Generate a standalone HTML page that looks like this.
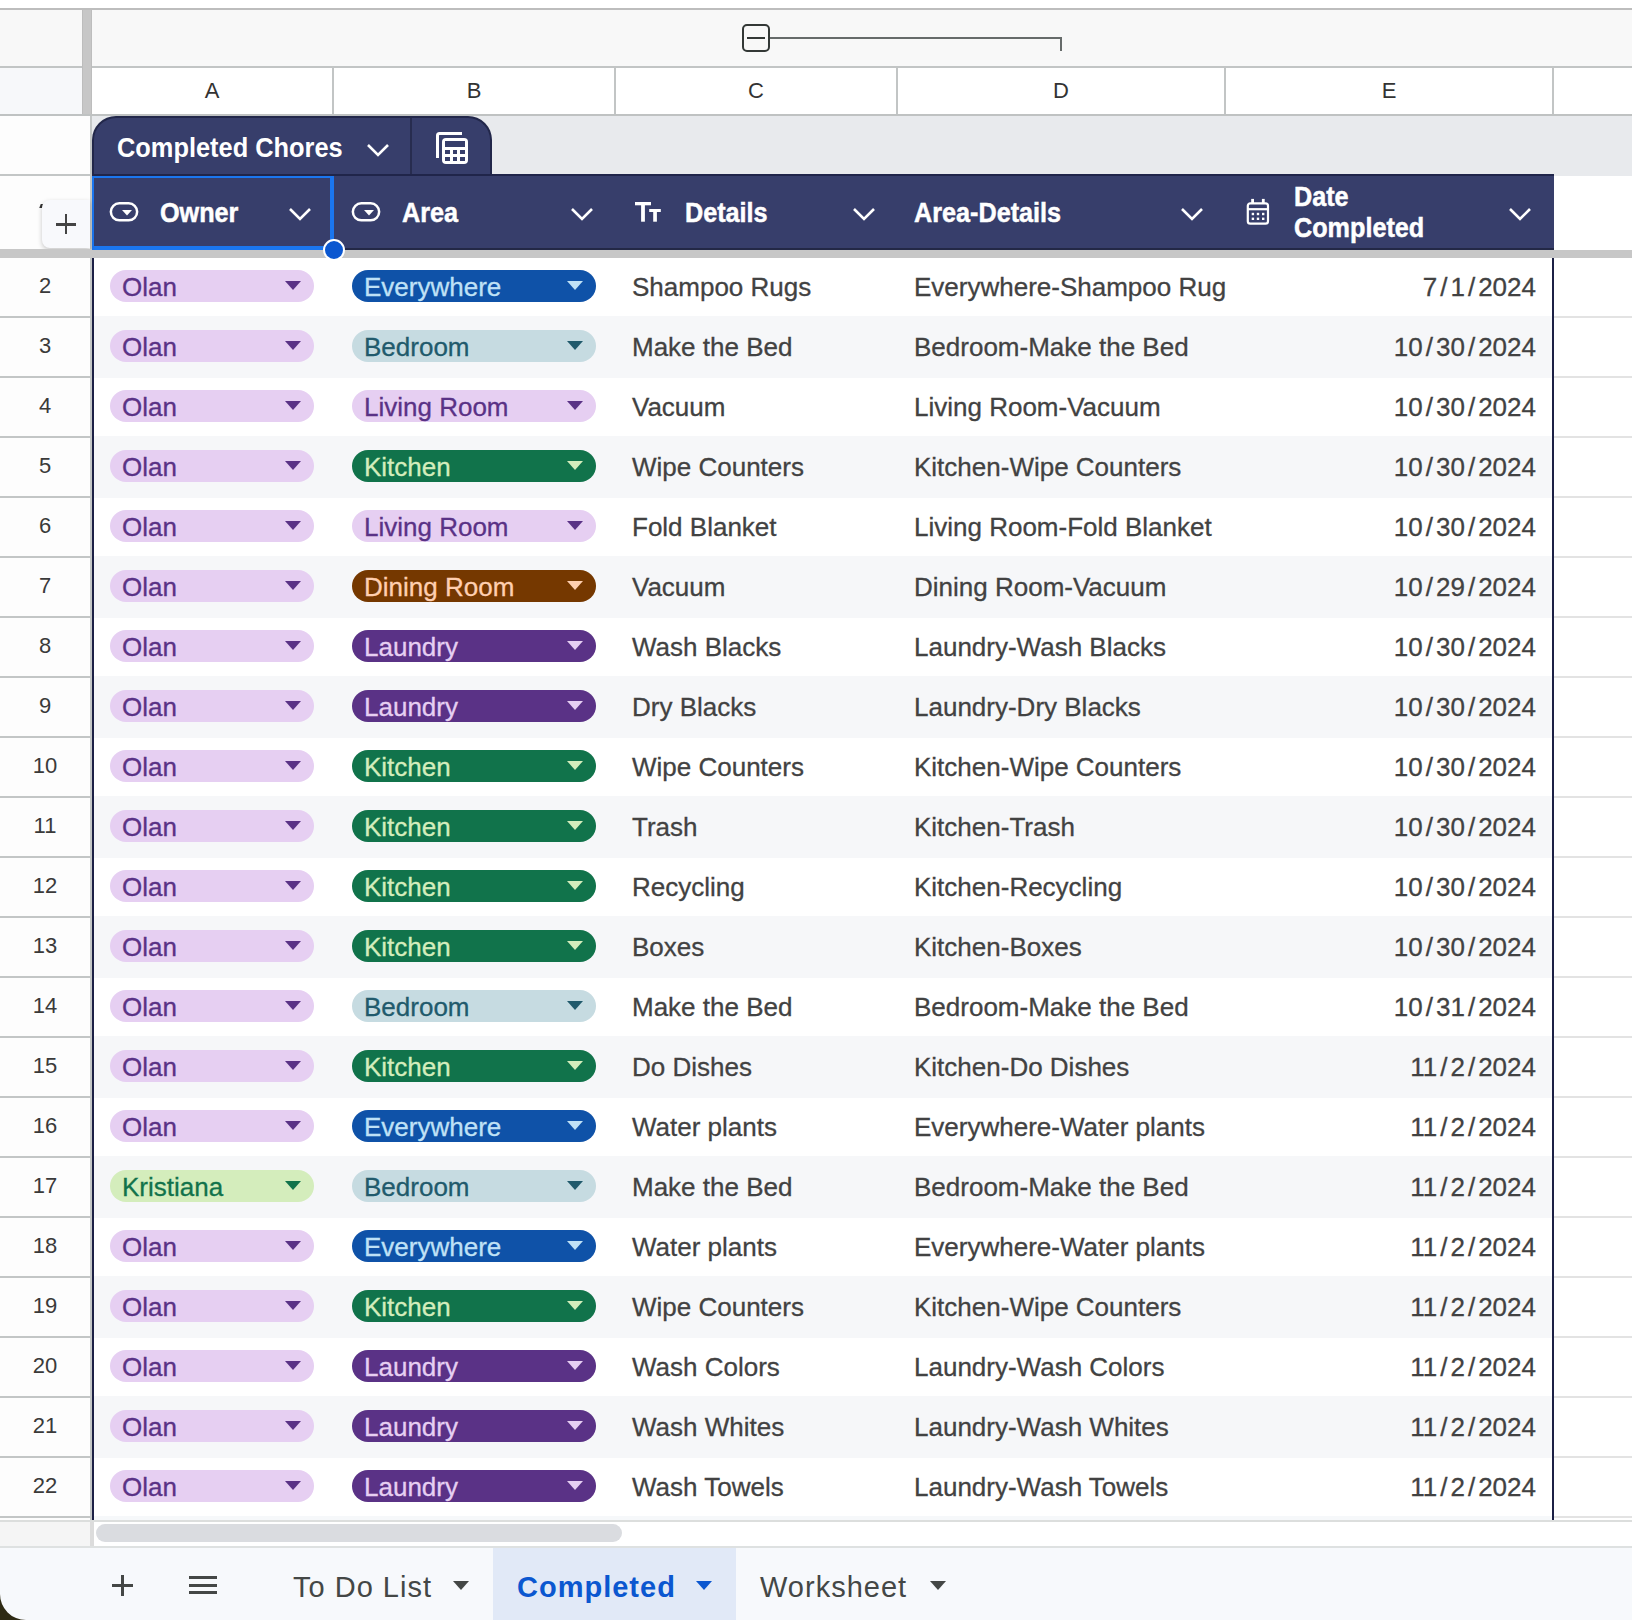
<!DOCTYPE html><html><head><meta charset="utf-8"><style>html,body{margin:0;padding:0;width:1632px;height:1620px;overflow:hidden;background:#fff;font-family:"Liberation Sans",sans-serif;}
.abs{position:absolute;}
.hl{left:0;width:1632px;height:2px;}
.colL{height:46px;line-height:46px;text-align:center;font-size:22px;color:#333;}
.tabname{background:#373e6b;border-radius:24px 24px 0 0;border:2px solid #22274a;border-bottom:none;box-sizing:border-box;}
.tntext{height:60px;line-height:62px;font-size:27px;color:#fff;font-weight:bold;}
.hdtext{height:74px;line-height:74px;font-size:28px;color:#fff;font-weight:bold;-webkit-text-stroke:0.5px #fff;}
.hdtext2{line-height:31px;font-size:28px;color:#fff;font-weight:bold;-webkit-text-stroke:0.5px #fff;}
.tt{height:74px;line-height:74px;color:#fff;}
.plusbtn{background:#f8f9fc;border-radius:8px 0 0 8px;box-shadow:0 2px 5px rgba(0,0,0,0.22);}
.rownum{line-height:60px;text-align:center;font-size:22px;color:#3a3a3a;}
.chip{height:32px;line-height:34px;-webkit-text-stroke:0.3px currentColor;border-radius:16px;font-size:26px;padding-left:12px;box-sizing:border-box;}
.chip .tri{position:absolute;right:13px;top:11px;width:0;height:0;border-left:8.5px solid transparent;border-right:8.5px solid transparent;border-top:9px solid currentColor;}
.lp{background:#e6cff2;color:#5a3286;}
.lg{background:#d4edbc;color:#11734b;}
.db{background:#0f52a8;color:#bfe1f6;}
.lc{background:#c6dbe1;color:#215a6c;}
.dg{background:#11734b;color:#d4edbc;}
.dbr{background:#753800;color:#ffcfb0;}
.dp{background:#5a3286;color:#e6cff2;}
.cell{height:60px;line-height:62px;font-size:26px;color:#424242;white-space:nowrap;-webkit-text-stroke:0.3px currentColor;}
.sheet{height:72px;line-height:72px;font-size:29px;letter-spacing:1px;}
.act{font-weight:bold;}
.stri{width:0;height:0;border-left:8px solid transparent;border-right:8px solid transparent;border-top:9px solid #444;}

.sx{display:inline-block;transform:scaleX(0.9);transform-origin:0 50%;}
.sx2{display:inline-block;transform:scaleX(0.94);transform-origin:0 50%;}
.sl{margin:0 3px;}
</style></head><body><div class="abs" style="left:0;top:0;width:1632px;height:8px;background:#fff"></div>
<div class="abs hl" style="top:8px;background:#bdbdbd"></div>
<div class="abs" style="left:0;top:10px;width:1632px;height:56px;background:#f8f8f8"></div>
<div class="abs hl" style="top:66px;background:#c2c5c5"></div>
<div class="abs" style="left:0;top:68px;width:82px;height:46px;background:#f7f8fa"></div>
<div class="abs" style="left:92px;top:68px;width:1540px;height:46px;background:#fff"></div>
<div class="abs hl" style="top:114px;background:#bfc2c2"></div>
<div class="abs" style="left:82px;top:10px;width:10px;height:104px;background:#c7c7c7;border-left:1px solid #bdbdbd;border-right:1px solid #bdbdbd;box-sizing:border-box"></div>
<div class="abs" style="left:742px;top:24px;width:28px;height:28px;border:2px solid #333836;border-radius:5px;box-sizing:border-box"></div>
<div class="abs" style="left:747px;top:37px;width:18px;height:2px;background:#333836"></div>
<div class="abs" style="left:770px;top:37px;width:292px;height:2px;background:#666b6a"></div>
<div class="abs" style="left:1060px;top:37px;width:2px;height:14px;background:#666b6a"></div>
<div class="abs colL" style="left:92px;width:240px;top:68px">A</div>
<div class="abs colL" style="left:334px;width:280px;top:68px">B</div>
<div class="abs colL" style="left:616px;width:280px;top:68px">C</div>
<div class="abs colL" style="left:898px;width:326px;top:68px">D</div>
<div class="abs colL" style="left:1226px;width:326px;top:68px">E</div>
<div class="abs" style="left:332px;top:68px;width:2px;height:46px;background:#c2c5c5"></div>
<div class="abs" style="left:614px;top:68px;width:2px;height:46px;background:#c2c5c5"></div>
<div class="abs" style="left:896px;top:68px;width:2px;height:46px;background:#c2c5c5"></div>
<div class="abs" style="left:1224px;top:68px;width:2px;height:46px;background:#c2c5c5"></div>
<div class="abs" style="left:1552px;top:68px;width:2px;height:46px;background:#c2c5c5"></div>
<div class="abs" style="left:0;top:116px;width:90px;height:134px;background:#fdfdfd"></div>
<div class="abs" style="left:90px;top:116px;width:2px;height:134px;background:#c4c7c7"></div>
<div class="abs" style="left:92px;top:116px;width:1540px;height:60px;background:#e8eaed"></div>
<div class="abs" style="left:1554px;top:176px;width:78px;height:74px;background:#fff"></div>
<div class="abs tabname" style="left:92px;top:116px;width:400px;height:60px"></div>
<div class="abs tntext" style="left:117px;top:117px"><span class="sx2">Completed Chores</span></div>
<svg class="abs" style="left:366px;top:142px" width="24" height="16" viewBox="0 0 24 16"><path d="M2 3 L12 13 L22 3" fill="none" stroke="#fff" stroke-width="2.6"/></svg>
<div class="abs" style="left:410px;top:118px;width:2px;height:58px;background:#272c4f"></div>
<svg class="abs" style="left:430px;top:128px" width="44" height="40" viewBox="0 0 44 40">
<path d="M7.5 30 V7.5 Q7.5 5.5 9.5 5.5 H32" fill="none" stroke="#fff" stroke-width="3"/>
<rect x="12" y="10" width="26" height="26" rx="4" fill="#fff"/>
<rect x="15" y="13" width="20" height="6" fill="#373e6b"/>
<rect x="15" y="22" width="5" height="4" fill="#373e6b"/><rect x="23" y="22" width="4" height="4" fill="#373e6b"/><rect x="30" y="22" width="5" height="4" fill="#373e6b"/>
<rect x="15" y="29" width="5" height="4" fill="#373e6b"/><rect x="23" y="29" width="4" height="4" fill="#373e6b"/><rect x="30" y="29" width="5" height="4" fill="#373e6b"/>
</svg>
<div class="abs" style="left:92px;top:174px;width:1462px;height:76px;background:#373e6b;border-top:2px solid #20254a;border-bottom:2px solid #232846;box-sizing:border-box"></div>
<svg class="abs" style="left:108px;top:200px" width="32" height="24" viewBox="0 0 32 24"><rect x="2.85" y="3.35" width="26.3" height="16.9" rx="8.45" fill="none" stroke="#fff" stroke-width="2.5"/><path d="M14 10 H24 L19 15.5 Z" fill="#fff"/></svg>
<div class="abs hdtext" style="left:160px;top:176px"><span class="sx">Owner</span></div>
<svg class="abs" style="left:288px;top:206px" width="24" height="16" viewBox="0 0 24 16"><path d="M2 3 L12 13 L22 3" fill="none" stroke="#fff" stroke-width="2.6"/></svg>
<svg class="abs" style="left:350px;top:200px" width="32" height="24" viewBox="0 0 32 24"><rect x="2.85" y="3.35" width="26.3" height="16.9" rx="8.45" fill="none" stroke="#fff" stroke-width="2.5"/><path d="M14 10 H24 L19 15.5 Z" fill="#fff"/></svg>
<div class="abs hdtext" style="left:402px;top:176px"><span class="sx">Area</span></div>
<svg class="abs" style="left:570px;top:206px" width="24" height="16" viewBox="0 0 24 16"><path d="M2 3 L12 13 L22 3" fill="none" stroke="#fff" stroke-width="2.6"/></svg>
<svg class="abs" style="left:630px;top:198px" width="36" height="28" viewBox="0 0 36 28"><rect x="5" y="4" width="16" height="3.3" fill="#fff"/><rect x="11.1" y="4" width="3.8" height="19.7" fill="#fff"/><rect x="19.2" y="11" width="11.6" height="3" fill="#fff"/><rect x="23.2" y="11" width="3.7" height="12.7" fill="#fff"/></svg>
<div class="abs hdtext" style="left:685px;top:176px"><span class="sx">Details</span></div>
<svg class="abs" style="left:852px;top:206px" width="24" height="16" viewBox="0 0 24 16"><path d="M2 3 L12 13 L22 3" fill="none" stroke="#fff" stroke-width="2.6"/></svg>
<div class="abs hdtext" style="left:914px;top:176px"><span class="sx">Area-Details</span></div>
<svg class="abs" style="left:1180px;top:206px" width="24" height="16" viewBox="0 0 24 16"><path d="M2 3 L12 13 L22 3" fill="none" stroke="#fff" stroke-width="2.6"/></svg>
<svg class="abs" style="left:1244px;top:197px" width="28" height="30" viewBox="0 0 28 30"><rect x="3.8" y="6.3" width="20.2" height="20.4" rx="2.5" fill="none" stroke="#fff" stroke-width="2.2"/><rect x="3.8" y="11.1" width="20.2" height="2.2" fill="#fff"/><rect x="7.2" y="1.9" width="2.8" height="4.5" fill="#fff"/><rect x="17.9" y="1.9" width="2.8" height="4.5" fill="#fff"/>
<rect x="7.7" y="15.8" width="2.4" height="2.4" fill="#fff"/><rect x="12.8" y="15.8" width="2.4" height="2.4" fill="#fff"/><rect x="18" y="15.8" width="2.4" height="2.4" fill="#fff"/>
<rect x="7.7" y="20.6" width="2.4" height="2.4" fill="#fff"/><rect x="12.8" y="20.6" width="2.4" height="2.4" fill="#fff"/><rect x="18" y="20.6" width="2.4" height="2.4" fill="#fff"/></svg>
<div class="abs hdtext2" style="left:1294px;top:181px"><span class="sx">Date<br>Completed</span></div>
<svg class="abs" style="left:1508px;top:206px" width="24" height="16" viewBox="0 0 24 16"><path d="M2 3 L12 13 L22 3" fill="none" stroke="#fff" stroke-width="2.6"/></svg>
<div class="abs" style="left:92px;top:176px;width:242px;height:74px;border:4px solid #1b76ef;border-top:2px solid #1b76ef;border-left:2px solid #1b76ef;box-sizing:border-box"></div>
<div class="abs" style="left:40px;top:204px;width:3px;height:4px;background:#333;transform:skewX(-20deg)"></div>
<div class="abs" style="left:0;top:174px;width:90px;height:2px;background:#c3c6c6"></div>
<div class="abs plusbtn" style="left:42px;top:200px;width:48px;height:48px"></div>
<div class="abs" style="left:56px;top:223px;width:20px;height:2.5px;background:#444"></div>
<div class="abs" style="left:64.8px;top:214px;width:2.5px;height:20px;background:#444"></div>
<div class="abs" style="left:0;top:249px;width:92px;height:9px;background:#c7c7c7"></div>
<div class="abs" style="left:92px;top:250px;width:1540px;height:8px;background:#c7c7c7"></div>
<div class="abs" style="left:0;top:258px;width:1632px;height:58px;background:#fff"></div>
<div class="abs" style="left:0;top:258px;width:90px;height:58px;background:#fdfdfd"></div>
<div class="abs" style="left:0;top:316px;width:90px;height:60px;background:#fdfdfd"></div>
<div class="abs" style="left:1554px;top:316px;width:78px;height:60px;background:#fff"></div>
<div class="abs" style="left:0;top:376px;width:90px;height:60px;background:#fdfdfd"></div>
<div class="abs" style="left:94px;top:376px;width:1458px;height:60px;background:#fff"></div>
<div class="abs" style="left:1554px;top:376px;width:78px;height:60px;background:#fff"></div>
<div class="abs" style="left:0;top:436px;width:90px;height:60px;background:#fdfdfd"></div>
<div class="abs" style="left:1554px;top:436px;width:78px;height:60px;background:#fff"></div>
<div class="abs" style="left:0;top:496px;width:90px;height:60px;background:#fdfdfd"></div>
<div class="abs" style="left:94px;top:496px;width:1458px;height:60px;background:#fff"></div>
<div class="abs" style="left:1554px;top:496px;width:78px;height:60px;background:#fff"></div>
<div class="abs" style="left:0;top:556px;width:90px;height:60px;background:#fdfdfd"></div>
<div class="abs" style="left:1554px;top:556px;width:78px;height:60px;background:#fff"></div>
<div class="abs" style="left:0;top:616px;width:90px;height:60px;background:#fdfdfd"></div>
<div class="abs" style="left:94px;top:616px;width:1458px;height:60px;background:#fff"></div>
<div class="abs" style="left:1554px;top:616px;width:78px;height:60px;background:#fff"></div>
<div class="abs" style="left:0;top:676px;width:90px;height:60px;background:#fdfdfd"></div>
<div class="abs" style="left:1554px;top:676px;width:78px;height:60px;background:#fff"></div>
<div class="abs" style="left:0;top:736px;width:90px;height:60px;background:#fdfdfd"></div>
<div class="abs" style="left:94px;top:736px;width:1458px;height:60px;background:#fff"></div>
<div class="abs" style="left:1554px;top:736px;width:78px;height:60px;background:#fff"></div>
<div class="abs" style="left:0;top:796px;width:90px;height:60px;background:#fdfdfd"></div>
<div class="abs" style="left:1554px;top:796px;width:78px;height:60px;background:#fff"></div>
<div class="abs" style="left:0;top:856px;width:90px;height:60px;background:#fdfdfd"></div>
<div class="abs" style="left:94px;top:856px;width:1458px;height:60px;background:#fff"></div>
<div class="abs" style="left:1554px;top:856px;width:78px;height:60px;background:#fff"></div>
<div class="abs" style="left:0;top:916px;width:90px;height:60px;background:#fdfdfd"></div>
<div class="abs" style="left:1554px;top:916px;width:78px;height:60px;background:#fff"></div>
<div class="abs" style="left:0;top:976px;width:90px;height:60px;background:#fdfdfd"></div>
<div class="abs" style="left:94px;top:976px;width:1458px;height:60px;background:#fff"></div>
<div class="abs" style="left:1554px;top:976px;width:78px;height:60px;background:#fff"></div>
<div class="abs" style="left:0;top:1036px;width:90px;height:60px;background:#fdfdfd"></div>
<div class="abs" style="left:1554px;top:1036px;width:78px;height:60px;background:#fff"></div>
<div class="abs" style="left:0;top:1096px;width:90px;height:60px;background:#fdfdfd"></div>
<div class="abs" style="left:94px;top:1096px;width:1458px;height:60px;background:#fff"></div>
<div class="abs" style="left:1554px;top:1096px;width:78px;height:60px;background:#fff"></div>
<div class="abs" style="left:0;top:1156px;width:90px;height:60px;background:#fdfdfd"></div>
<div class="abs" style="left:1554px;top:1156px;width:78px;height:60px;background:#fff"></div>
<div class="abs" style="left:0;top:1216px;width:90px;height:60px;background:#fdfdfd"></div>
<div class="abs" style="left:94px;top:1216px;width:1458px;height:60px;background:#fff"></div>
<div class="abs" style="left:1554px;top:1216px;width:78px;height:60px;background:#fff"></div>
<div class="abs" style="left:0;top:1276px;width:90px;height:60px;background:#fdfdfd"></div>
<div class="abs" style="left:1554px;top:1276px;width:78px;height:60px;background:#fff"></div>
<div class="abs" style="left:0;top:1336px;width:90px;height:60px;background:#fdfdfd"></div>
<div class="abs" style="left:94px;top:1336px;width:1458px;height:60px;background:#fff"></div>
<div class="abs" style="left:1554px;top:1336px;width:78px;height:60px;background:#fff"></div>
<div class="abs" style="left:0;top:1396px;width:90px;height:60px;background:#fdfdfd"></div>
<div class="abs" style="left:1554px;top:1396px;width:78px;height:60px;background:#fff"></div>
<div class="abs" style="left:0;top:1456px;width:90px;height:60px;background:#fdfdfd"></div>
<div class="abs" style="left:94px;top:1456px;width:1458px;height:60px;background:#fff"></div>
<div class="abs" style="left:1554px;top:1456px;width:78px;height:60px;background:#fff"></div>
<div class="abs" style="left:94px;top:1396px;width:1458px;height:62px;background:#f6f7f9"></div>
<div class="abs" style="left:94px;top:1276px;width:1458px;height:62px;background:#f6f7f9"></div>
<div class="abs" style="left:94px;top:1156px;width:1458px;height:62px;background:#f6f7f9"></div>
<div class="abs" style="left:94px;top:1036px;width:1458px;height:62px;background:#f6f7f9"></div>
<div class="abs" style="left:94px;top:916px;width:1458px;height:62px;background:#f6f7f9"></div>
<div class="abs" style="left:94px;top:796px;width:1458px;height:62px;background:#f6f7f9"></div>
<div class="abs" style="left:94px;top:676px;width:1458px;height:62px;background:#f6f7f9"></div>
<div class="abs" style="left:94px;top:556px;width:1458px;height:62px;background:#f6f7f9"></div>
<div class="abs" style="left:94px;top:436px;width:1458px;height:62px;background:#f6f7f9"></div>
<div class="abs" style="left:94px;top:316px;width:1458px;height:62px;background:#f6f7f9"></div>
<div class="abs" style="left:0;top:316px;width:90px;height:2px;background:#c3c6c6"></div>
<div class="abs" style="left:1554px;top:316px;width:78px;height:2px;background:#e3e3e3"></div>
<div class="abs" style="left:0;top:376px;width:90px;height:2px;background:#c3c6c6"></div>
<div class="abs" style="left:1554px;top:376px;width:78px;height:2px;background:#e3e3e3"></div>
<div class="abs" style="left:0;top:436px;width:90px;height:2px;background:#c3c6c6"></div>
<div class="abs" style="left:1554px;top:436px;width:78px;height:2px;background:#e3e3e3"></div>
<div class="abs" style="left:0;top:496px;width:90px;height:2px;background:#c3c6c6"></div>
<div class="abs" style="left:1554px;top:496px;width:78px;height:2px;background:#e3e3e3"></div>
<div class="abs" style="left:0;top:556px;width:90px;height:2px;background:#c3c6c6"></div>
<div class="abs" style="left:1554px;top:556px;width:78px;height:2px;background:#e3e3e3"></div>
<div class="abs" style="left:0;top:616px;width:90px;height:2px;background:#c3c6c6"></div>
<div class="abs" style="left:1554px;top:616px;width:78px;height:2px;background:#e3e3e3"></div>
<div class="abs" style="left:0;top:676px;width:90px;height:2px;background:#c3c6c6"></div>
<div class="abs" style="left:1554px;top:676px;width:78px;height:2px;background:#e3e3e3"></div>
<div class="abs" style="left:0;top:736px;width:90px;height:2px;background:#c3c6c6"></div>
<div class="abs" style="left:1554px;top:736px;width:78px;height:2px;background:#e3e3e3"></div>
<div class="abs" style="left:0;top:796px;width:90px;height:2px;background:#c3c6c6"></div>
<div class="abs" style="left:1554px;top:796px;width:78px;height:2px;background:#e3e3e3"></div>
<div class="abs" style="left:0;top:856px;width:90px;height:2px;background:#c3c6c6"></div>
<div class="abs" style="left:1554px;top:856px;width:78px;height:2px;background:#e3e3e3"></div>
<div class="abs" style="left:0;top:916px;width:90px;height:2px;background:#c3c6c6"></div>
<div class="abs" style="left:1554px;top:916px;width:78px;height:2px;background:#e3e3e3"></div>
<div class="abs" style="left:0;top:976px;width:90px;height:2px;background:#c3c6c6"></div>
<div class="abs" style="left:1554px;top:976px;width:78px;height:2px;background:#e3e3e3"></div>
<div class="abs" style="left:0;top:1036px;width:90px;height:2px;background:#c3c6c6"></div>
<div class="abs" style="left:1554px;top:1036px;width:78px;height:2px;background:#e3e3e3"></div>
<div class="abs" style="left:0;top:1096px;width:90px;height:2px;background:#c3c6c6"></div>
<div class="abs" style="left:1554px;top:1096px;width:78px;height:2px;background:#e3e3e3"></div>
<div class="abs" style="left:0;top:1156px;width:90px;height:2px;background:#c3c6c6"></div>
<div class="abs" style="left:1554px;top:1156px;width:78px;height:2px;background:#e3e3e3"></div>
<div class="abs" style="left:0;top:1216px;width:90px;height:2px;background:#c3c6c6"></div>
<div class="abs" style="left:1554px;top:1216px;width:78px;height:2px;background:#e3e3e3"></div>
<div class="abs" style="left:0;top:1276px;width:90px;height:2px;background:#c3c6c6"></div>
<div class="abs" style="left:1554px;top:1276px;width:78px;height:2px;background:#e3e3e3"></div>
<div class="abs" style="left:0;top:1336px;width:90px;height:2px;background:#c3c6c6"></div>
<div class="abs" style="left:1554px;top:1336px;width:78px;height:2px;background:#e3e3e3"></div>
<div class="abs" style="left:0;top:1396px;width:90px;height:2px;background:#c3c6c6"></div>
<div class="abs" style="left:1554px;top:1396px;width:78px;height:2px;background:#e3e3e3"></div>
<div class="abs" style="left:0;top:1456px;width:90px;height:2px;background:#c3c6c6"></div>
<div class="abs" style="left:1554px;top:1456px;width:78px;height:2px;background:#e3e3e3"></div>
<div class="abs" style="left:0;top:1516px;width:90px;height:2px;background:#c3c6c6"></div>
<div class="abs" style="left:1554px;top:1516px;width:78px;height:2px;background:#e3e3e3"></div>
<div class="abs rownum" style="left:0;top:256px;width:90px;height:60px">2</div>
<div class="abs chip lp" style="left:110px;top:270px;width:204px">Olan<i class="tri"></i></div>
<div class="abs chip db" style="left:352px;top:270px;width:244px">Everywhere<i class="tri"></i></div>
<div class="abs cell" style="left:632px;top:256px">Shampoo Rugs</div>
<div class="abs cell" style="left:914px;top:256px">Everywhere-Shampoo Rug</div>
<div class="abs cell" style="right:96px;top:256px;text-align:right">7<span class="sl">/</span>1<span class="sl">/</span>2024</div>
<div class="abs rownum" style="left:0;top:316px;width:90px;height:60px">3</div>
<div class="abs chip lp" style="left:110px;top:330px;width:204px">Olan<i class="tri"></i></div>
<div class="abs chip lc" style="left:352px;top:330px;width:244px">Bedroom<i class="tri"></i></div>
<div class="abs cell" style="left:632px;top:316px">Make the Bed</div>
<div class="abs cell" style="left:914px;top:316px">Bedroom-Make the Bed</div>
<div class="abs cell" style="right:96px;top:316px;text-align:right">10<span class="sl">/</span>30<span class="sl">/</span>2024</div>
<div class="abs rownum" style="left:0;top:376px;width:90px;height:60px">4</div>
<div class="abs chip lp" style="left:110px;top:390px;width:204px">Olan<i class="tri"></i></div>
<div class="abs chip lp" style="left:352px;top:390px;width:244px">Living Room<i class="tri"></i></div>
<div class="abs cell" style="left:632px;top:376px">Vacuum</div>
<div class="abs cell" style="left:914px;top:376px">Living Room-Vacuum</div>
<div class="abs cell" style="right:96px;top:376px;text-align:right">10<span class="sl">/</span>30<span class="sl">/</span>2024</div>
<div class="abs rownum" style="left:0;top:436px;width:90px;height:60px">5</div>
<div class="abs chip lp" style="left:110px;top:450px;width:204px">Olan<i class="tri"></i></div>
<div class="abs chip dg" style="left:352px;top:450px;width:244px">Kitchen<i class="tri"></i></div>
<div class="abs cell" style="left:632px;top:436px">Wipe Counters</div>
<div class="abs cell" style="left:914px;top:436px">Kitchen-Wipe Counters</div>
<div class="abs cell" style="right:96px;top:436px;text-align:right">10<span class="sl">/</span>30<span class="sl">/</span>2024</div>
<div class="abs rownum" style="left:0;top:496px;width:90px;height:60px">6</div>
<div class="abs chip lp" style="left:110px;top:510px;width:204px">Olan<i class="tri"></i></div>
<div class="abs chip lp" style="left:352px;top:510px;width:244px">Living Room<i class="tri"></i></div>
<div class="abs cell" style="left:632px;top:496px">Fold Blanket</div>
<div class="abs cell" style="left:914px;top:496px">Living Room-Fold Blanket</div>
<div class="abs cell" style="right:96px;top:496px;text-align:right">10<span class="sl">/</span>30<span class="sl">/</span>2024</div>
<div class="abs rownum" style="left:0;top:556px;width:90px;height:60px">7</div>
<div class="abs chip lp" style="left:110px;top:570px;width:204px">Olan<i class="tri"></i></div>
<div class="abs chip dbr" style="left:352px;top:570px;width:244px">Dining Room<i class="tri"></i></div>
<div class="abs cell" style="left:632px;top:556px">Vacuum</div>
<div class="abs cell" style="left:914px;top:556px">Dining Room-Vacuum</div>
<div class="abs cell" style="right:96px;top:556px;text-align:right">10<span class="sl">/</span>29<span class="sl">/</span>2024</div>
<div class="abs rownum" style="left:0;top:616px;width:90px;height:60px">8</div>
<div class="abs chip lp" style="left:110px;top:630px;width:204px">Olan<i class="tri"></i></div>
<div class="abs chip dp" style="left:352px;top:630px;width:244px">Laundry<i class="tri"></i></div>
<div class="abs cell" style="left:632px;top:616px">Wash Blacks</div>
<div class="abs cell" style="left:914px;top:616px">Laundry-Wash Blacks</div>
<div class="abs cell" style="right:96px;top:616px;text-align:right">10<span class="sl">/</span>30<span class="sl">/</span>2024</div>
<div class="abs rownum" style="left:0;top:676px;width:90px;height:60px">9</div>
<div class="abs chip lp" style="left:110px;top:690px;width:204px">Olan<i class="tri"></i></div>
<div class="abs chip dp" style="left:352px;top:690px;width:244px">Laundry<i class="tri"></i></div>
<div class="abs cell" style="left:632px;top:676px">Dry Blacks</div>
<div class="abs cell" style="left:914px;top:676px">Laundry-Dry Blacks</div>
<div class="abs cell" style="right:96px;top:676px;text-align:right">10<span class="sl">/</span>30<span class="sl">/</span>2024</div>
<div class="abs rownum" style="left:0;top:736px;width:90px;height:60px">10</div>
<div class="abs chip lp" style="left:110px;top:750px;width:204px">Olan<i class="tri"></i></div>
<div class="abs chip dg" style="left:352px;top:750px;width:244px">Kitchen<i class="tri"></i></div>
<div class="abs cell" style="left:632px;top:736px">Wipe Counters</div>
<div class="abs cell" style="left:914px;top:736px">Kitchen-Wipe Counters</div>
<div class="abs cell" style="right:96px;top:736px;text-align:right">10<span class="sl">/</span>30<span class="sl">/</span>2024</div>
<div class="abs rownum" style="left:0;top:796px;width:90px;height:60px">11</div>
<div class="abs chip lp" style="left:110px;top:810px;width:204px">Olan<i class="tri"></i></div>
<div class="abs chip dg" style="left:352px;top:810px;width:244px">Kitchen<i class="tri"></i></div>
<div class="abs cell" style="left:632px;top:796px">Trash</div>
<div class="abs cell" style="left:914px;top:796px">Kitchen-Trash</div>
<div class="abs cell" style="right:96px;top:796px;text-align:right">10<span class="sl">/</span>30<span class="sl">/</span>2024</div>
<div class="abs rownum" style="left:0;top:856px;width:90px;height:60px">12</div>
<div class="abs chip lp" style="left:110px;top:870px;width:204px">Olan<i class="tri"></i></div>
<div class="abs chip dg" style="left:352px;top:870px;width:244px">Kitchen<i class="tri"></i></div>
<div class="abs cell" style="left:632px;top:856px">Recycling</div>
<div class="abs cell" style="left:914px;top:856px">Kitchen-Recycling</div>
<div class="abs cell" style="right:96px;top:856px;text-align:right">10<span class="sl">/</span>30<span class="sl">/</span>2024</div>
<div class="abs rownum" style="left:0;top:916px;width:90px;height:60px">13</div>
<div class="abs chip lp" style="left:110px;top:930px;width:204px">Olan<i class="tri"></i></div>
<div class="abs chip dg" style="left:352px;top:930px;width:244px">Kitchen<i class="tri"></i></div>
<div class="abs cell" style="left:632px;top:916px">Boxes</div>
<div class="abs cell" style="left:914px;top:916px">Kitchen-Boxes</div>
<div class="abs cell" style="right:96px;top:916px;text-align:right">10<span class="sl">/</span>30<span class="sl">/</span>2024</div>
<div class="abs rownum" style="left:0;top:976px;width:90px;height:60px">14</div>
<div class="abs chip lp" style="left:110px;top:990px;width:204px">Olan<i class="tri"></i></div>
<div class="abs chip lc" style="left:352px;top:990px;width:244px">Bedroom<i class="tri"></i></div>
<div class="abs cell" style="left:632px;top:976px">Make the Bed</div>
<div class="abs cell" style="left:914px;top:976px">Bedroom-Make the Bed</div>
<div class="abs cell" style="right:96px;top:976px;text-align:right">10<span class="sl">/</span>31<span class="sl">/</span>2024</div>
<div class="abs rownum" style="left:0;top:1036px;width:90px;height:60px">15</div>
<div class="abs chip lp" style="left:110px;top:1050px;width:204px">Olan<i class="tri"></i></div>
<div class="abs chip dg" style="left:352px;top:1050px;width:244px">Kitchen<i class="tri"></i></div>
<div class="abs cell" style="left:632px;top:1036px">Do Dishes</div>
<div class="abs cell" style="left:914px;top:1036px">Kitchen-Do Dishes</div>
<div class="abs cell" style="right:96px;top:1036px;text-align:right">11<span class="sl">/</span>2<span class="sl">/</span>2024</div>
<div class="abs rownum" style="left:0;top:1096px;width:90px;height:60px">16</div>
<div class="abs chip lp" style="left:110px;top:1110px;width:204px">Olan<i class="tri"></i></div>
<div class="abs chip db" style="left:352px;top:1110px;width:244px">Everywhere<i class="tri"></i></div>
<div class="abs cell" style="left:632px;top:1096px">Water plants</div>
<div class="abs cell" style="left:914px;top:1096px">Everywhere-Water plants</div>
<div class="abs cell" style="right:96px;top:1096px;text-align:right">11<span class="sl">/</span>2<span class="sl">/</span>2024</div>
<div class="abs rownum" style="left:0;top:1156px;width:90px;height:60px">17</div>
<div class="abs chip lg" style="left:110px;top:1170px;width:204px">Kristiana<i class="tri"></i></div>
<div class="abs chip lc" style="left:352px;top:1170px;width:244px">Bedroom<i class="tri"></i></div>
<div class="abs cell" style="left:632px;top:1156px">Make the Bed</div>
<div class="abs cell" style="left:914px;top:1156px">Bedroom-Make the Bed</div>
<div class="abs cell" style="right:96px;top:1156px;text-align:right">11<span class="sl">/</span>2<span class="sl">/</span>2024</div>
<div class="abs rownum" style="left:0;top:1216px;width:90px;height:60px">18</div>
<div class="abs chip lp" style="left:110px;top:1230px;width:204px">Olan<i class="tri"></i></div>
<div class="abs chip db" style="left:352px;top:1230px;width:244px">Everywhere<i class="tri"></i></div>
<div class="abs cell" style="left:632px;top:1216px">Water plants</div>
<div class="abs cell" style="left:914px;top:1216px">Everywhere-Water plants</div>
<div class="abs cell" style="right:96px;top:1216px;text-align:right">11<span class="sl">/</span>2<span class="sl">/</span>2024</div>
<div class="abs rownum" style="left:0;top:1276px;width:90px;height:60px">19</div>
<div class="abs chip lp" style="left:110px;top:1290px;width:204px">Olan<i class="tri"></i></div>
<div class="abs chip dg" style="left:352px;top:1290px;width:244px">Kitchen<i class="tri"></i></div>
<div class="abs cell" style="left:632px;top:1276px">Wipe Counters</div>
<div class="abs cell" style="left:914px;top:1276px">Kitchen-Wipe Counters</div>
<div class="abs cell" style="right:96px;top:1276px;text-align:right">11<span class="sl">/</span>2<span class="sl">/</span>2024</div>
<div class="abs rownum" style="left:0;top:1336px;width:90px;height:60px">20</div>
<div class="abs chip lp" style="left:110px;top:1350px;width:204px">Olan<i class="tri"></i></div>
<div class="abs chip dp" style="left:352px;top:1350px;width:244px">Laundry<i class="tri"></i></div>
<div class="abs cell" style="left:632px;top:1336px">Wash Colors</div>
<div class="abs cell" style="left:914px;top:1336px">Laundry-Wash Colors</div>
<div class="abs cell" style="right:96px;top:1336px;text-align:right">11<span class="sl">/</span>2<span class="sl">/</span>2024</div>
<div class="abs rownum" style="left:0;top:1396px;width:90px;height:60px">21</div>
<div class="abs chip lp" style="left:110px;top:1410px;width:204px">Olan<i class="tri"></i></div>
<div class="abs chip dp" style="left:352px;top:1410px;width:244px">Laundry<i class="tri"></i></div>
<div class="abs cell" style="left:632px;top:1396px">Wash Whites</div>
<div class="abs cell" style="left:914px;top:1396px">Laundry-Wash Whites</div>
<div class="abs cell" style="right:96px;top:1396px;text-align:right">11<span class="sl">/</span>2<span class="sl">/</span>2024</div>
<div class="abs rownum" style="left:0;top:1456px;width:90px;height:60px">22</div>
<div class="abs chip lp" style="left:110px;top:1470px;width:204px">Olan<i class="tri"></i></div>
<div class="abs chip dp" style="left:352px;top:1470px;width:244px">Laundry<i class="tri"></i></div>
<div class="abs cell" style="left:632px;top:1456px">Wash Towels</div>
<div class="abs cell" style="left:914px;top:1456px">Laundry-Wash Towels</div>
<div class="abs cell" style="right:96px;top:1456px;text-align:right">11<span class="sl">/</span>2<span class="sl">/</span>2024</div>
<div class="abs" style="left:90px;top:258px;width:2px;height:1262px;background:#c4c7c7"></div>
<div class="abs" style="left:92px;top:258px;width:2px;height:1262px;background:#1c2045"></div>
<div class="abs" style="left:1552px;top:258px;width:2px;height:1262px;background:#1c2045"></div>
<div class="abs" style="left:94px;top:1516px;width:1458px;height:4px;background:#f6f8fa"></div>
<div class="abs" style="left:0;top:1516px;width:90px;height:4px;background:#fdfdfd"></div>
<div class="abs" style="left:0;top:1516px;width:90px;height:2px;background:#c3c6c6"></div>
<div class="abs hl" style="top:1520px;background:#dcdedd"></div>
<div class="abs" style="left:0;top:1522px;width:90px;height:24px;background:#f5f5f5"></div>
<div class="abs" style="left:90px;top:1522px;width:4px;height:24px;background:#dcdcdc"></div>
<div class="abs" style="left:94px;top:1522px;width:1538px;height:24px;background:#fff"></div>
<div class="abs" style="left:96px;top:1524px;width:526px;height:18px;border-radius:9px;background:#dadce0"></div>
<div class="abs hl" style="top:1546px;background:#dee1e1"></div>
<div class="abs" style="left:0;top:1548px;width:1632px;height:72px;background:#f7f9fc"></div>
<div class="abs" style="left:493px;top:1548px;width:243px;height:72px;background:#e1e9f7"></div>
<div class="abs" style="left:112px;top:1583.5px;width:21px;height:3px;background:#444746"></div>
<div class="abs" style="left:121px;top:1574.5px;width:3px;height:21px;background:#444746"></div>
<div class="abs" style="left:189px;top:1576px;width:28px;height:3px;background:#444746"></div>
<div class="abs" style="left:189px;top:1583.5px;width:28px;height:3px;background:#444746"></div>
<div class="abs" style="left:189px;top:1591px;width:28px;height:3px;background:#444746"></div>
<div class="abs sheet" style="left:293px;top:1551px;color:#444746">To Do List</div>
<div class="abs stri" style="left:453px;top:1581px;border-top-color:#444746"></div>
<div class="abs sheet act" style="left:517px;top:1551px;color:#0b57d0">Completed</div>
<div class="abs stri" style="left:696px;top:1581px;border-top-color:#0b57d0"></div>
<div class="abs sheet" style="left:760px;top:1551px;color:#444746">Worksheet</div>
<div class="abs stri" style="left:930px;top:1581px;border-top-color:#444746"></div>
<div class="abs" style="left:323px;top:239px;width:22px;height:22px;border-radius:50%;background:#0b57d0;border:2px solid #fff;box-sizing:border-box"></div>
<svg class="abs" style="left:0;top:1594px" width="28" height="26" viewBox="0 0 28 26"><path d="M0 0 A26 26 0 0 0 26 26 H0 Z" fill="#2e2a14"/></svg></body></html>
